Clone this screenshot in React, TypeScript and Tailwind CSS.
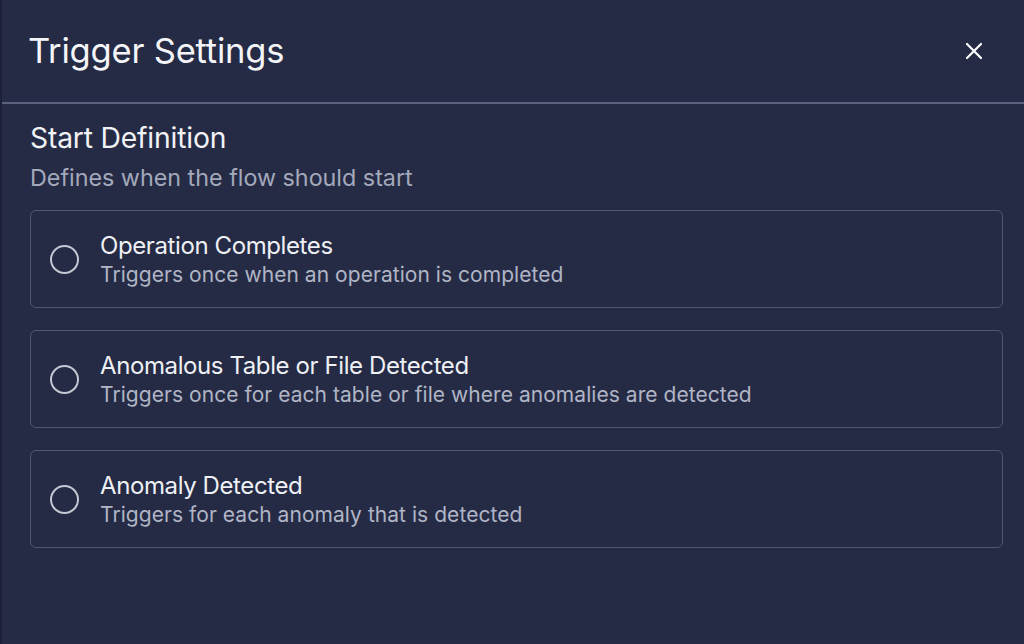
import React from "react";

const options = [
  { title: "Operation Completes", desc: "Triggers once when an operation is completed" },
  { title: "Anomalous Table or File Detected", desc: "Triggers once for each table or file where anomalies are detected" },
  { title: "Anomaly Detected", desc: "Triggers for each anomaly that is detected" },
];

export default function App() {
  return (
    <div
      className="w-[1024px] h-[644px] bg-[#252b45] border-l-2 border-[#1c2139] flex flex-col overflow-hidden"
      style={{ fontFamily: "Inter, 'Noto Sans', sans-serif" }}
    >
      <div className="h-[104px] flex items-center justify-between pl-[26px] pr-[38px] border-b-2 border-[#5a6280] shrink-0">
        <h1 className="text-[34.5px] leading-[44px] text-[#f4f5f8] tracking-[-0.2px]">Trigger Settings</h1>
        <button className="w-6 h-6 flex items-center justify-center text-white">
          <svg width="18" height="18" viewBox="0 0 18 18" fill="none" stroke="currentColor" strokeWidth="2.2" strokeLinecap="round">
            <path d="M2 2L16 16M16 2L2 16" />
          </svg>
        </button>
      </div>
      <div className="pl-[28px] pr-[21px] pt-[17px]">
        <h2 className="text-[28.3px] leading-[34px] text-[#f1f2f6] tracking-[-0.2px]">Start Definition</h2>
        <p className="text-[23.3px] leading-[30px] text-[#a3a9bb] mt-[8px]">Defines when the flow should start</p>
        <div className="mt-[17px] flex flex-col gap-[22px]">
          {options.map((o) => (
            <div
              key={o.title}
              className="h-[98px] border-[1.5px] border-[#4f5775] rounded-[6px] flex items-center pl-[19px]"
            >
              <div className="w-[29px] h-[29px] rounded-full border-2 border-[#c4c8d3] shrink-0" />
              <div className="ml-[21px] flex flex-col pt-[3px]">
                <span className="text-[24px] leading-[28px] text-[#eef0f4] tracking-[-0.4px]">{o.title}</span>
                <span className="text-[21px] leading-[29px] text-[#b0b5c5] tracking-[0.05px]">{o.desc}</span>
              </div>
            </div>
          ))}
        </div>
      </div>
    </div>
  );
}
